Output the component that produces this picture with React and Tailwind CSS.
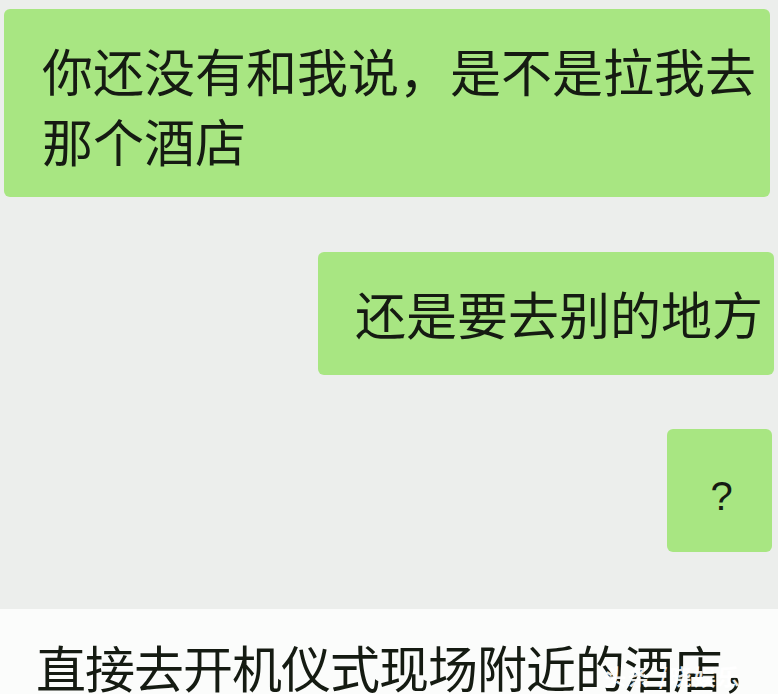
import React from 'react';

const cjk = { fontFamily: '"Noto Sans CJK SC", "Noto Sans", sans-serif' };

function App() {
  return (
    <div className="w-[778px] h-[694px] overflow-hidden flex flex-col bg-[#eceeec] text-[#151b12]" style={cjk}>
      <div className="h-[3px] bg-[#dcdce6]" />

      {/* chat area */}
      <div className="flex flex-col pt-[9px] pb-[57px]">
        <div className="ml-[4px] mr-[8px] bg-[#a8e682] rounded-[6px] pl-[38px] pr-[8px] pt-[26px] pb-[22px] text-[51px] leading-[70px]">
          你还没有和我说，是不是拉我去
          <br />
          那个酒店
        </div>

        <div className="self-end mt-[55px] mr-[4px] w-[456px] h-[123px] bg-[#a8e682] rounded-[6px] flex items-center pl-[37px] text-[51px]">
          还是要去别的地方
        </div>

        <div className="self-end mt-[54px] mr-[6px] w-[105px] h-[123px] bg-[#a8e682] rounded-[6px] flex items-center justify-center pl-[4px] pt-[10px] text-[40px] font-['Liberation_Sans',sans-serif]">
          ?
        </div>
      </div>

      {/* caption below */}
      <div className="relative flex-1 bg-[#fbfcfb] pl-[36px] pt-[22px]">
        <div className="text-[50px] leading-[70px] whitespace-nowrap tracking-[-1px]">直接去开机仪式现场附近的酒店，</div>
        <div className="absolute left-[604px] top-[50px] text-[22px] font-bold text-white/90 tracking-[2px] whitespace-nowrap">
          头条 /晓娱乐
        </div>
      </div>
    </div>
  );
}

export default App;
